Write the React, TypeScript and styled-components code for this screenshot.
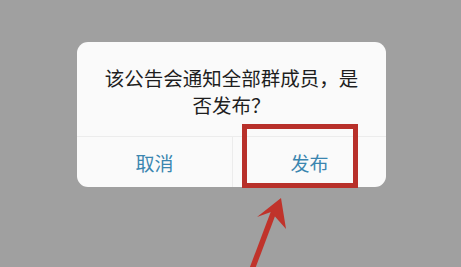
import styled, { createGlobalStyle } from "styled-components";

const GlobalStyle = createGlobalStyle`
  html, body {
    margin: 0;
    padding: 0;
    background: #a0a0a0;
  }
`;

const Screen = styled.div`
  position: relative;
  width: 461px;
  height: 267px;
  overflow: hidden;
  box-sizing: border-box;
  padding: 42px 0 0 77px;
  background: #a0a0a0;
  font-family: "Noto Sans CJK SC", "Noto Sans", sans-serif;
`;

const Dialog = styled.div`
  width: 309px;
  height: 145px;
  display: flex;
  flex-direction: column;
  background: #fafafa;
  border-radius: 11px;
  overflow: hidden;
`;

const Message = styled.div`
  flex: 1;
  box-sizing: border-box;
  padding: 22px 24px 0;
  text-align: center;
  font-size: 19.5px;
  line-height: 27px;
  color: #1e1e1e;
  border-bottom: 1px solid #ececec;
`;

const Actions = styled.div`
  height: 50px;
  display: grid;
  grid-template-columns: 156px 1fr;
`;

const ActionButton = styled.button<{ $divider?: boolean }>`
  border: none;
  background: transparent;
  padding: 0;
  font-family: inherit;
  font-size: 19px;
  color: #3b86b0;
  border-right: ${({ $divider }) => ($divider ? "1px solid #ececec" : "none")};
`;

const Highlight = styled.div`
  position: absolute;
  left: 242px;
  top: 124px;
  width: 116px;
  height: 64px;
  box-sizing: border-box;
  border: 5px solid #b8302a;
  pointer-events: none;
`;

const Overlay = styled.svg`
  position: absolute;
  left: 0;
  top: 0;
  pointer-events: none;
`;

export default function App() {
  return (
    <>
      <GlobalStyle />
      <Screen>
        <Dialog>
          <Message>该公告会通知全部群成员，是否发布？</Message>
          <Actions>
            <ActionButton $divider>取消</ActionButton>
            <ActionButton>发布</ActionButton>
          </Actions>
        </Dialog>
        <Highlight />
        <Overlay width="461" height="267" viewBox="0 0 461 267">
          <line
            x1="251"
            y1="272"
            x2="274"
            y2="211"
            stroke="#c0332b"
            strokeWidth="5.5"
          />
          <polygon
            points="281,198 257,217 271,212 286,229"
            fill="#c0332b"
          />
        </Overlay>
      </Screen>
    </>
  );
}
